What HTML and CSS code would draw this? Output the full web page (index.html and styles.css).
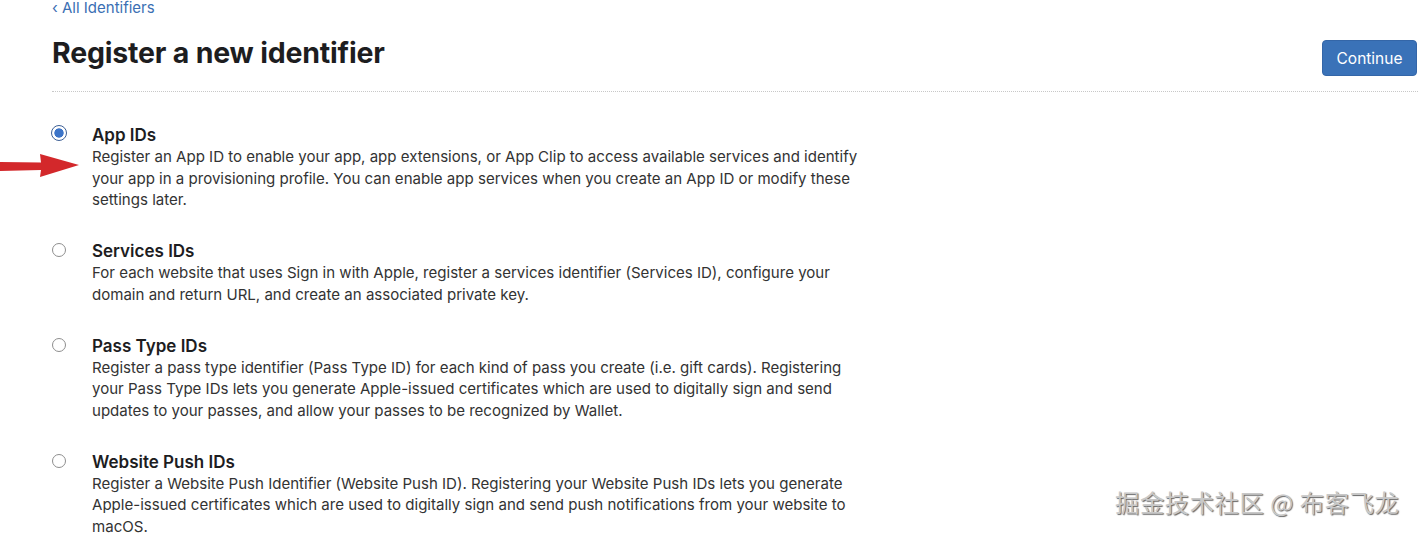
FILE: index.html
```html
<!DOCTYPE html>
<html>
<head>
<meta charset="utf-8">
<link rel="stylesheet" href="styles.css">
</head>
<body>
<div class="page">
  <a class="back" href="#">‹ All Identifiers</a>
  <div class="header">
    <h1 class="title">Register a new identifier</h1>
    <button class="continue">Continue</button>
  </div>
  <div class="divider"></div>
  <div class="options">
    <div class="option">
      <span class="radio checked"></span>
      <div class="body">
        <div class="opt-title">App IDs</div>
        <p class="desc">Register an App ID to enable your app, app extensions, or App Clip to access available services and identify your app in a provisioning profile. You can enable app services when you create an App ID or modify these settings later.</p>
      </div>
    </div>
    <div class="option">
      <span class="radio"></span>
      <div class="body">
        <div class="opt-title">Services IDs</div>
        <p class="desc">For each website that uses Sign in with Apple, register a services identifier (Services ID), configure your domain and return URL, and create an associated private key.</p>
      </div>
    </div>
    <div class="option">
      <span class="radio"></span>
      <div class="body">
        <div class="opt-title">Pass Type IDs</div>
        <p class="desc">Register a pass type identifier (Pass Type ID) for each kind of pass you create (i.e. gift cards). Registering your Pass Type IDs lets you generate Apple-issued certificates which are used to digitally sign and send updates to your passes, and allow your passes to be recognized by Wallet.</p>
      </div>
    </div>
    <div class="option">
      <span class="radio"></span>
      <div class="body">
        <div class="opt-title">Website Push IDs</div>
        <p class="desc">Register a Website Push Identifier (Website Push ID). Registering your Website Push IDs lets you generate Apple-issued certificates which are used to digitally sign and send push notifications from your website to macOS.</p>
      </div>
    </div>
  </div>
</div>
<svg class="arrow" width="80" height="26" viewBox="0 0 80 26"><path d="M0 8 L41 8.5 L40 0 L79 11 L40 23 L41 16 L0 17 Z" fill="#d3282b"/></svg>
<div class="watermark">掘金技术社区 @ 布客飞龙</div>
</body>
</html>
```
FILE: styles.css
```css
html, body {
  margin: 0;
  padding: 0;
  background: #fff;
}
body {
  font-family: Inter, "Noto Sans", sans-serif;
  color: #1d1d1f;
  width: 1418px;
  position: relative;
}
.page {
  padding: 0 1px 0 52px;
}
.back {
  display: block;
  color: #3b6fb3;
  font-size: 15px;
  line-height: 18px;
  text-decoration: none;
  margin-top: -1px;
}
.header {
  display: flex;
  justify-content: space-between;
  align-items: flex-start;
  padding-bottom: 15px;
}
.title {
  margin: 19px 0 0;
  font-size: 28.5px;
  line-height: 34px;
  font-weight: 700;
  color: #1d1d1f;
  letter-spacing: -0.2px;
}
.continue {
  margin-top: 23px;
  width: 95px;
  height: 36px;
  background: #3a72b8;
  border: 1px solid #3466a8;
  border-radius: 4px;
  color: #fff;
  font-family: Inter, "Noto Sans", sans-serif;
  font-size: 15.5px;
  padding: 0;
}
.divider {
  border-top: 1px dotted #c8c8c8;
  margin-right: -1px;
}
.options {
  margin-top: 33px;
  display: flex;
  flex-direction: column;
  gap: 30.5px;
}
.option {
  display: flex;
  align-items: flex-start;
}
.radio {
  width: 14px;
  height: 14px;
  border: 1px solid #8e8e8e;
  border-radius: 50%;
  margin-top: 2px;
  margin-right: 26px;
  box-sizing: border-box;
  flex: none;
  background: #fff;
}
.radio.checked {
  border: 1.5px solid #3d5f95;
  background: radial-gradient(circle, #3c74c8 0 4.3px, #fff 5px);
  width: 16px;
  height: 16px;
  margin-left: -1px;
  margin-top: 0;
  margin-right: 25px;
}
.body {
  width: 780px;
}
.opt-title {
  font-size: 17px;
  line-height: 20px;
  font-weight: 600;
  color: #1d1d1f;
}
.desc {
  margin: 1px 0 0;
  font-size: 15.05px;
  line-height: 21.5px;
  color: #333;
}
.arrow {
  position: absolute;
  left: 0;
  top: 154px;
}
.watermark {
  position: absolute;
  left: 1115px;
  top: 484px;
  font-family: "Noto Sans CJK SC", sans-serif;
  font-size: 24.4px;
  color: #c8c8c8;
  text-shadow: 1px 1px 1px #666, -1px -1px 0 #fff;
  letter-spacing: 0.5px;
}
```
